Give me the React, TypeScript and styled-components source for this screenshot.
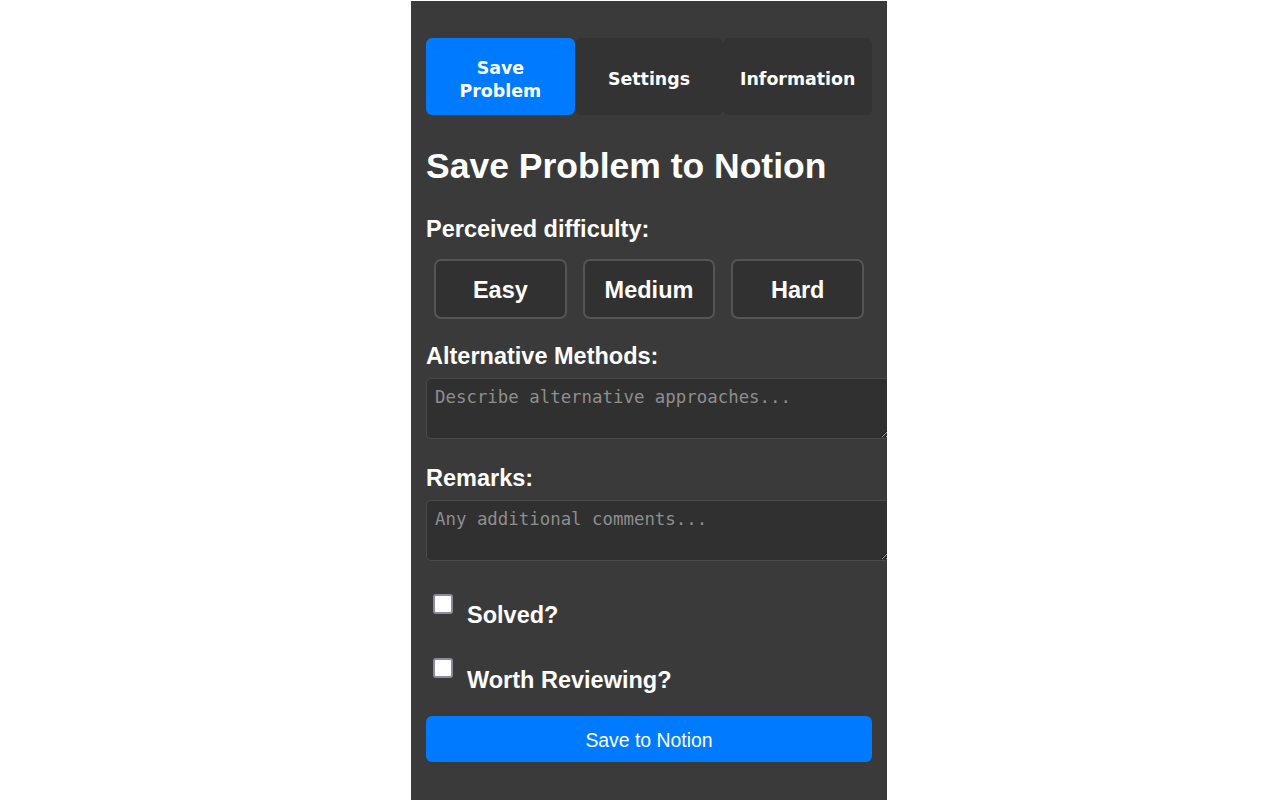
import React from "react";
import styled, { createGlobalStyle } from "styled-components";

const Global = createGlobalStyle`
  html, body { margin: 0; padding: 0; background: #ffffff; }
  * { box-sizing: border-box; }
`;

const Page = styled.div`
  display: flex;
  padding: 1px 0 0 411px;
  min-height: 800px;
`;

const Panel = styled.div`
  width: 476px;
  min-height: 799px;
  background: #3a3a3a;
  padding: 37px 15px 30px;
  overflow: hidden;
  font-family: "Liberation Sans", Arial, sans-serif;
  color: #ffffff;
  display: flex;
  flex-direction: column;
`;

const Tabs = styled.div`
  display: flex;
  height: 77px;
`;

const Tab = styled.button<{ $active?: boolean }>`
  flex: 1;
  border: none;
  border-radius: 6px;
  padding: 6px 10px 0;
  background: ${(p) => (p.$active ? "#007bff" : "#333333")};
  color: #ffffff;
  font-family: "DejaVu Sans", Verdana, sans-serif;
  font-weight: bold;
  font-size: 17.4px;
  line-height: 23px;
  text-align: center;
  cursor: pointer;
`;

const Title = styled.h1`
  margin: 31px 0 0;
  font-size: 35.5px;
  line-height: 40px;
  font-weight: bold;
`;

const Label = styled.div<{ $top: number }>`
  margin-top: ${(p) => p.$top}px;
  font-size: 23.5px;
  line-height: 27px;
  font-weight: bold;
`;

const DifficultyRow = styled.div`
  display: flex;
  margin-top: 16px;
  height: 60px;
`;

const DiffButton = styled.button`
  flex: 1;
  margin: 0 8px;
  padding: 2px 0 0;
  background: #313131;
  border: 2px solid #555555;
  border-radius: 7px;
  color: #ffffff;
  font-family: "Liberation Sans", Arial, sans-serif;
  font-weight: bold;
  font-size: 23.5px;
  cursor: pointer;
`;

const TextArea = styled.textarea`
  display: block;
  margin-top: 8px;
  width: 464px;
  height: 61px;
  flex-shrink: 0;
  padding: 8px;
  background: #303030;
  border: 1px solid #4a4a4a;
  border-radius: 5px;
  color: #ffffff;
  font-family: "DejaVu Sans Mono", "Liberation Mono", monospace;
  font-size: 17.4px;
  line-height: 21px;
  outline: none;
  &::placeholder {
    color: #8e8e8e;
  }
`;

const CheckRow = styled.label<{ $top: number }>`
  display: flex;
  align-items: flex-start;
  margin-top: ${(p) => p.$top}px;
  padding-left: 7px;
  cursor: pointer;
`;

const Box = styled.input`
  appearance: none;
  margin: 0;
  width: 20px;
  height: 20px;
  flex-shrink: 0;
  background: #ffffff;
  border: 2px solid #8d8aa0;
  border-radius: 3px;
`;

const CheckText = styled.span<{ $pad: number }>`
  margin-left: 14px;
  padding-top: ${(p) => p.$pad}px;
  font-size: 23.5px;
  line-height: 27px;
  font-weight: bold;
`;

const SaveButton = styled.button`
  margin-top: 22px;
  height: 46px;
  padding: 2px 0 0;
  border: none;
  border-radius: 6px;
  background: #007bff;
  color: #ffffff;
  font-family: "Liberation Sans", Arial, sans-serif;
  font-size: 19.4px;
  cursor: pointer;
`;

export default function App() {
  return (
    <>
      <Global />
      <Page>
        <Panel>
          <Tabs>
            <Tab $active>Save Problem</Tab>
            <Tab>Settings</Tab>
            <Tab>Information</Tab>
          </Tabs>
          <Title>Save Problem to Notion</Title>
          <Label $top={30}>Perceived difficulty:</Label>
          <DifficultyRow>
            <DiffButton>Easy</DiffButton>
            <DiffButton>Medium</DiffButton>
            <DiffButton>Hard</DiffButton>
          </DifficultyRow>
          <Label $top={24}>Alternative Methods:</Label>
          <TextArea placeholder="Describe alternative approaches..." />
          <Label $top={26}>Remarks:</Label>
          <TextArea placeholder="Any additional comments..." />
          <CheckRow $top={33}>
            <Box type="checkbox" />
            <CheckText $pad={8}>Solved?</CheckText>
          </CheckRow>
          <CheckRow $top={29}>
            <Box type="checkbox" />
            <CheckText $pad={9}>Worth Reviewing?</CheckText>
          </CheckRow>
          <SaveButton>Save to Notion</SaveButton>
        </Panel>
      </Page>
    </>
  );
}
